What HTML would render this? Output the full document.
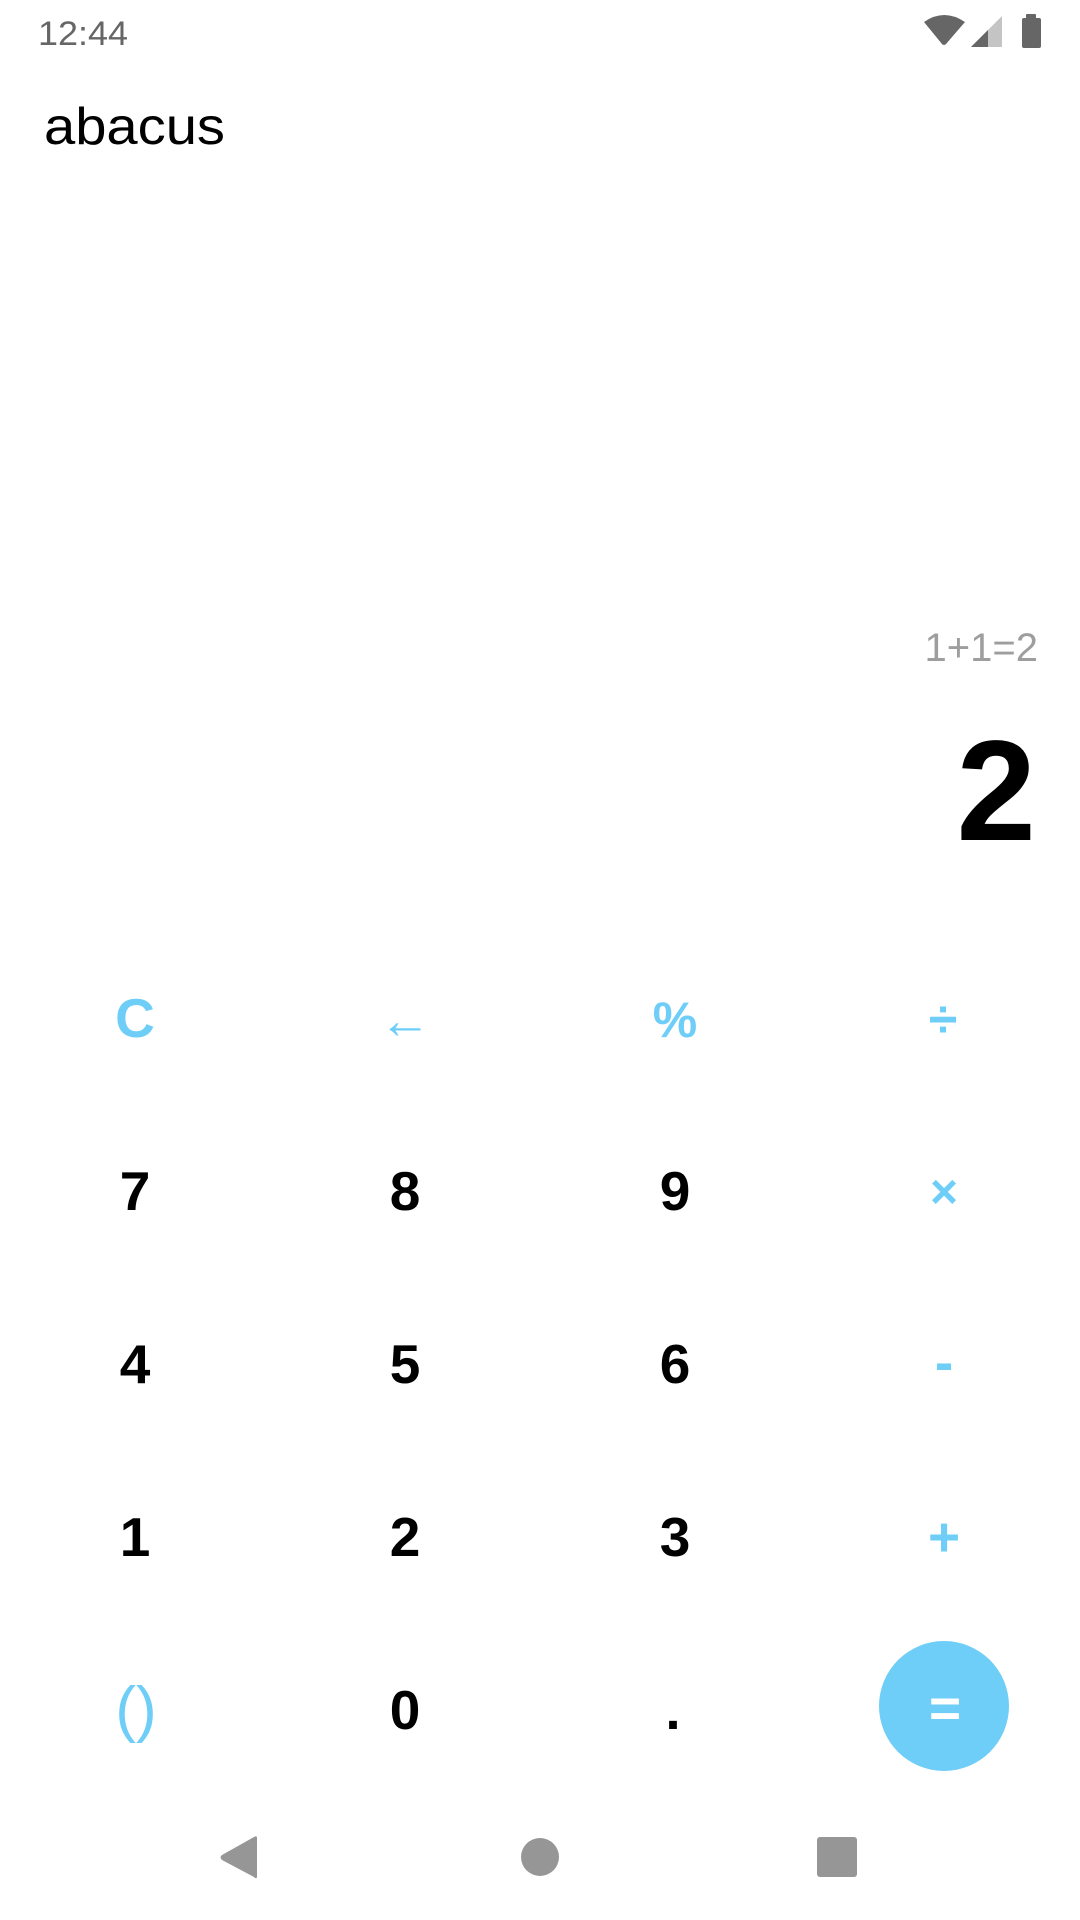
<!DOCTYPE html>
<html><head><meta charset="utf-8"><style>
html,body{margin:0;padding:0;background:#fff;width:1080px;height:1920px;overflow:hidden}
svg{display:block}
</style></head><body>
<svg width="1080" height="1920" viewBox="0 0 1080 1920" xmlns="http://www.w3.org/2000/svg" font-family="Liberation Sans, Arial, sans-serif">
<rect width="1080" height="1920" fill="#fff"/>
<!-- status bar -->
<text x="38" y="45" font-size="34" fill="#666" textLength="90" lengthAdjust="spacingAndGlyphs">12:44</text>
<path d="M924 22 Q944 8 965 22 L946 44 Q944 46 942 44 Z" fill="#666"/>
<path d="M971 47 L1002 16 L1002 47 Z" fill="#c4c4c4"/>
<path d="M971 47 L988 30 L988 47 Z" fill="#666"/>
<rect x="1026" y="14" width="10" height="5" rx="1" fill="#666"/>
<rect x="1022" y="18" width="19" height="30" rx="2" fill="#666"/>
<!-- title -->
<text x="44" y="144" font-size="52" fill="#000" textLength="181" lengthAdjust="spacingAndGlyphs">abacus</text>
<!-- display -->
<text x="1038" y="661" font-size="40" fill="#9e9e9e" text-anchor="end">1+1=2</text>
<text x="1036" y="840" font-size="143" font-weight="bold" fill="#000" text-anchor="end">2</text>
<!-- keypad -->
<g font-weight="bold" font-size="55" text-anchor="middle">
<text x="135" y="1037" fill="#6ecef8">C</text>
<text x="405" y="1038" fill="#6ecef8" font-size="52" font-weight="normal">←</text>
<text x="675" y="1037" fill="#6ecef8" font-size="50">%</text>
<text x="943" y="1037" fill="#6ecef8" font-size="52">÷</text>
<text x="135" y="1210" fill="#000">7</text>
<text x="405" y="1210" fill="#000">8</text>
<text x="675" y="1210" fill="#000">9</text>
<text x="944" y="1208" fill="#6ecef8" font-size="48">×</text>
<text x="135" y="1383" fill="#000">4</text>
<text x="405" y="1383" fill="#000">5</text>
<text x="675" y="1383" fill="#000">6</text>
<text x="944" y="1381" fill="#6ecef8">-</text>
<text x="944" y="1556" fill="#6ecef8">+</text>
<text x="135" y="1556" fill="#000">1</text>
<text x="405" y="1556" fill="#000">2</text>
<text x="675" y="1556" fill="#000">3</text>
<text x="136" y="1730" fill="#6ecef8" font-weight="normal" font-size="62">()</text>
<text x="405" y="1729" fill="#000">0</text>
<text x="673" y="1729" fill="#000">.</text>
<circle cx="944" cy="1706" r="65" fill="#6ecef8"/>
<text x="945" y="1727" fill="#fff">=</text>
</g>
<!-- nav bar -->
<path d="M257 1838 L257 1876 Q257 1880 254 1877 L222 1860 Q219 1857 222 1855 L254 1837 Q257 1835 257 1838 Z" fill="#969696"/>
<circle cx="540" cy="1857" r="19" fill="#969696"/>
<rect x="817" y="1837" width="40" height="40" rx="3" fill="#969696"/>
</svg>
</body></html>
